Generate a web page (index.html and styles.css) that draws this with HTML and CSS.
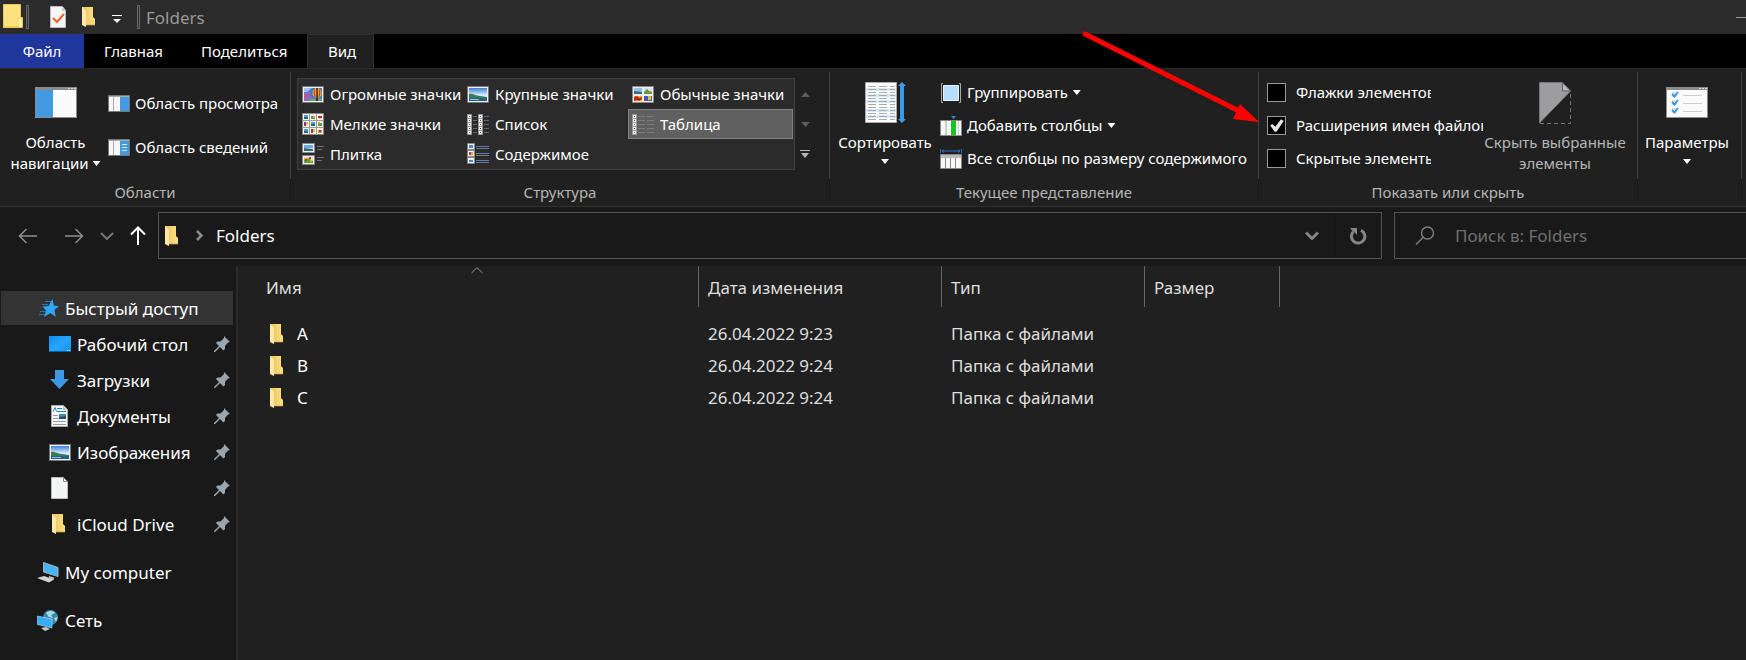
FILE: index.html
```
<!DOCTYPE html>
<html lang="ru">
<head>
<meta charset="utf-8">
<title>Folders</title>
<link rel="stylesheet" href="styles.css">
</head>
<body>
<svg class="sprite" aria-hidden="true">
  <defs>
    <linearGradient id="sky" x1="0" y1="0" x2="0" y2="1"><stop offset="0" stop-color="#3f7fd6"/><stop offset=".55" stop-color="#d6ecfa"/><stop offset="1" stop-color="#e9f6fb"/></linearGradient>
    <linearGradient id="blue" x1="0" y1="0" x2="1" y2="1"><stop offset="0" stop-color="#0a8df0"/><stop offset=".5" stop-color="#27a5fb"/><stop offset="1" stop-color="#0a93f5"/></linearGradient>
    <linearGradient id="gold" x1="0" y1="0" x2="1" y2="0"><stop offset="0" stop-color="#eac263"/><stop offset="1" stop-color="#ffe083"/></linearGradient>
  </defs>
  <symbol id="folder" viewBox="0 0 16 20"><path fill="url(#gold)" d="M1 0h11v10l2 2v6H1z"/><path fill="#ffe9a6" d="M1 0l4 4v16L1 18z"/><path fill="#d9ab4b" d="M5 17.500h9v.8H5z"/></symbol>
  <symbol id="scene" viewBox="0 0 22 17"><path fill="#eee" stroke="#777" d="M.5.5h21v16H.5z"/><path fill="url(#sky)" d="M2 2h18v13H2z"/><path fill="#3d7a56" d="M2 8c3-1 5 1 8 1.500 4 .5 7 1 10 1.500v1H2z"/><path fill="#266184" d="M2 12h18v3H2z"/><path fill="#8fc5e0" d="M3 13h9v1H3z"/></symbol>
  <symbol id="huge" viewBox="0 0 22 17"><path fill="#eee" stroke="#777" d="M.5.5h21v16H.5z"/><path fill="#3d79dc" d="M2 2h18v13H2z"/><path fill="#9bc3f2" d="M2 2h8l-5 4H2z"/><path fill="#8a6cc0" d="M2 6l3 1 2-2 2 2-1 3 3 3-1 2H2z"/><path fill="#e24b6c" d="M4 8l3 1-2 3H3z"/><path fill="#71a848" d="M9 13h11v2H7z"/><ellipse cx="15" cy="7" rx="4.500" ry="5" fill="#f4b51d"/><path fill="#1e1e2a" d="M14.300 2h1.400v11h-1.400z"/><path fill="none" stroke="#d5321f" stroke-width="1.200" d="M12.500 3.500c-1 3-.5 5 .8 7.500M17.500 3.500c1 3 .5 5-.8 7.500"/><path fill="#4a2b1a" d="M14 13h2v2h-2z"/></symbol>
  <symbol id="usual" viewBox="0 0 22 17"><path fill="#eee" stroke="#888" d="M.5.5h21v16H.5z"/><path fill="#8fc3ea" d="M2 2h8v6H2z"/><path fill="#2e7273" d="M2 5l8 1v2H2z"/><path fill="#cfe3f3" d="M12 2h8v6h-8z"/><path fill="#55a03c" d="M12 6l3-3 2 2 3 1v2h-8z"/><path fill="#e0742c" d="M17 5h2v2h-2z"/><path fill="#e7ab2a" d="M2 10h8v5H2z"/><path fill="#b8281c" d="M2 11l3-1 2 2 3-1v2l-3 2-2-1-3 1z"/><path fill="#2d62c8" d="M12 10h8v5h-8z"/><path fill="#f1bf25" d="M16 10h3v4h-3z"/><path fill="#a13676" d="M12 12l3 1v2h-3z"/></symbol>
  <symbol id="small" viewBox="0 0 22 22"><path fill="#f4f4f4" stroke="#888" d="M.5.5h21v21H.5z"/><path stroke="#9a9a9a" d="M7.500 0v22M14.500 0v22M0 7.500h22M0 14.500h22"/><path fill="#4b9bd5" d="M2 2h4v2H2zM9 9h4v2H9zM2 16h4v2H2z"/><path fill="#286a6b" d="M2 4h4v2H2zM9 11h4v2H9zM2 18h4v2H2z"/><path fill="#55a03c" d="M9 3h4v3H9zM16 10h4v3h-4z"/><path fill="#e8962e" d="M11 3h2v2h-2zM16 9h2v2h-2zM16 17h4v3h-4z"/><path fill="#bd2c1e" d="M16 3h4v2h-4zM17 17h2v2h-2zM9 17h2v3H9zM2 11h2v2H2z"/><path fill="#2458bf" d="M2 9h3v2H2zM9 16h3v1H9z"/><path fill="#f1bf25" d="M4 9h2v3H4zM11 16h2v3h-2zM17 5h2v1h-2z"/></symbol>
  <symbol id="list" viewBox="0 0 22 21"><g id="strip"><path fill="#eee" stroke="#999" d="M.5.5h4v20h-4z"/><path stroke="#999" d="M1 4.500h3M1 8.500h3M1 12.500h3M1 16.500h3"/><path fill="#2d6eb5" d="M2 2h1v1H2zM2 18h1v1H2z"/><path fill="#c43522" d="M2 6h1v1H2zM2 10h1v1H2z"/><path fill="#333" d="M2 14h1v1H2z"/></g><use href="#strip" x="11"/><path stroke="#666" d="M6 2.500h4M6 6.500h4M6 10.500h4M6 14.500h4M6 18.500h4M17 2.500h5M17 6.500h5M17 10.500h5M17 14.500h5M17 18.500h5"/></symbol>
  <symbol id="tile" viewBox="0 0 22 22"><path fill="#eee" stroke="#888" d="M.5.5h12v9H.5zM.5 12.500h12v9H.5z"/><path fill="#68aee3" d="M2 2h9v3H2z"/><path fill="#2e6e72" d="M2 5l9 1v2H2z"/><path fill="#d9e6c8" d="M2 14h9v6H2z"/><path fill="#59a33c" d="M2 17l4-2 5 3v2H2z"/><path fill="#f0a92b" d="M2 15h3v2H2zM8 17h2v2H8z"/><path fill="#c93a25" d="M3 16h2v2H3zM7 14h2v2H7z"/><path stroke="#717171" d="M15 3.500h7M15 6.500h5M15 14.500h7M15 17.500h5"/></symbol>
  <symbol id="content" viewBox="0 0 22 22"><path fill="#eee" stroke="#888" d="M.5.5h7v6h-7zM.5 7.500h7v6h-7zM.5 14.500h7v6h-7z"/><path fill="#438cc4" d="M2 2h4v3H2zM2 17h4v2H2z"/><path fill="#b83b70" d="M2 9h2v3H2z"/><path fill="#e8a827" d="M4 9h2v3H4z"/><path stroke="#4d7fc4" d="M9 3.500h13M9 10.500h13M9 17.500h13"/><path stroke="#777" d="M9 5.500h13M9 12.500h13M9 19.500h13"/></symbol>
  <symbol id="details" viewBox="0 0 22 21"><use href="#strip"/><path stroke="#7c7c7c" d="M6 2.500h7M6 6.500h7M6 10.500h7M6 14.500h7M6 18.500h7M15 2.500h7M15 6.500h7M15 10.500h7M15 14.500h7M15 18.500h7"/></symbol>
  <symbol id="pin" viewBox="0 0 16 16"><path fill="#9aa5ae" d="M10 0l6 6-2 .5-3 3.500 0 3-1.500 1.500L6 11l-5 5H0v-1l5-5-3-3L3.500 5.500h3L10 2z"/></symbol>
</svg>

<header class="titlebar">
  <svg class="app-icon" width="20" height="25" viewBox="0 0 20 25"><path fill="#ffe17f" stroke="#edc44f" d="M.5.5h17v13h2v10H.5z"/><path fill="#f3cc55" d="M0 22h16v2H0z"/><path fill="#fff0ae" d="M16 15h3v8h-3z"/></svg>
  <span class="grip"></span>
  <button class="quick" aria-label="Свойства"><svg width="16" height="22" viewBox="0 0 16 22"><path fill="#f6f6f6" stroke="#bbb" d="M.5.5h12l3 4v17H.5z"/><path fill="#ccc" d="M12 1v4h4z"/><path fill="none" stroke="#ee6323" stroke-width="2" d="M3 12l4 4 7-8"/></svg></button>
  <button class="quick folder-quick" aria-label="Новая папка"><svg width="16" height="20"><use href="#folder"/></svg></button>
  <button class="quick customize" aria-label="Настройка панели"><svg width="10" height="8" viewBox="0 0 10 8"><path fill="#fff" d="M0 0h10v1H0zM1 4h8L5 8z"/></svg></button>
  <span class="grip"></span>
  <h1 class="title">Folders</h1>
  <button class="minimize" aria-label="Свернуть"><svg width="10" height="1" viewBox="0 0 10 1"><path fill="#999" d="M0 0h10v1H0z"/></svg></button>
</header>

<nav class="tabs">
  <button class="tab tab-file">Файл</button>
  <button class="tab tab-home">Главная</button>
  <button class="tab tab-share">Поделиться</button>
  <button class="tab tab-active">Вид</button>
</nav>

<section class="ribbon">
  <div class="group group-panes">
    <div class="group-body">
      <button class="big"><svg class="big-icon" width="42" height="42" viewBox="0 0 42 42"><path fill="#fafafa" d="M0 5h42v31H0z"/><path fill="#8b8c8f" d="M0 5h42v3H0z"/><path fill="#429be2" d="M1 8h17v27H1z"/><path fill="none" stroke="#8b8c8f" d="M.5 5.500h41v30H.5z"/><path fill="#ddd" d="M33 6h2v1h-2zM36 6h2v1h-2zM39 6h2v1h-2z"/></svg><span>Область<br>навигации<i class="caret inline"></i></span></button>
      <div class="stack roomy">
        <button class="small"><svg width="22" height="17" viewBox="0 0 22 17"><path fill="#f7f7f7" stroke="#777" d="M.5.5h21v16H.5z"/><path fill="#429be2" d="M12 2h9v14h-9z"/><path fill="#aaa" d="M5 2h1v14H5zM1 1h20v1H1z"/></svg>Область просмотра</button>
        <button class="small"><svg width="22" height="17" viewBox="0 0 22 17"><path fill="#f7f7f7" stroke="#777" d="M.5.5h21v16H.5z"/><path fill="#429be2" d="M12 2h9v14h-9z"/><path fill="#aaa" d="M5 2h1v14H5zM1 1h20v1H1z"/><path stroke="#d5ebfb" d="M14 5.500h5M14 8.500h5M14 11.500h5"/></svg>Область сведений</button>
      </div>
    </div>
    <h2 class="group-name">Области</h2>
  </div>

  <div class="group group-layout">
    <div class="group-body">
      <div class="gallery">
        <button class="view"><svg width="22" height="17"><use href="#huge"/></svg>Огромные значки</button>
        <button class="view"><svg width="22" height="17"><use href="#scene"/></svg>Крупные значки</button>
        <button class="view"><svg width="22" height="17"><use href="#usual"/></svg>Обычные значки</button>
        <button class="view"><svg width="22" height="22"><use href="#small"/></svg>Мелкие значки</button>
        <button class="view"><svg width="22" height="21"><use href="#list"/></svg>Список</button>
        <button class="view selected"><svg width="22" height="21"><use href="#details"/></svg>Таблица</button>
        <button class="view"><svg width="22" height="22"><use href="#tile"/></svg>Плитка</button>
        <button class="view"><svg width="22" height="22"><use href="#content"/></svg>Содержимое</button>
      </div>
      <div class="gallery-scroll">
        <button aria-label="Вверх"><svg width="9" height="5" viewBox="0 0 9 5"><path fill="#5d5d5d" d="M0 5h9L4.500 0z"/></svg></button>
        <button aria-label="Вниз"><svg width="9" height="5" viewBox="0 0 9 5"><path fill="#5d5d5d" d="M0 0h9L4.500 5z"/></svg></button>
        <button aria-label="Ещё"><svg width="10" height="8" viewBox="0 0 10 8"><path fill="#b5b5b5" d="M0 0h10v1H0zM1 3h8L5 8z"/></svg></button>
      </div>
    </div>
    <h2 class="group-name">Структура</h2>
  </div>

  <div class="group group-current">
    <div class="group-body">
      <button class="big"><svg class="big-icon" width="42" height="42" viewBox="0 0 42 42"><path fill="#fff" stroke="#aaa" d="M1.500.500h31v40H1.500z"/><path fill="#d5eaf4" d="M2 6h30v3H2zM2 12h30v3H2zM2 18h30v3H2zM2 27h30v3H2zM2 33h30v3H2z"/><path stroke="#aaa" stroke-dasharray="8 3" d="M4 4.500h27M4 7.500h27M4 10.500h27M4 13.500h27M4 16.500h27M4 19.500h27M4 22.500h27M4 25.500h27M4 28.500h27M4 31.500h27M4 34.500h27M4 37.500h27"/><path fill="#3d9ae6" d="M38 0l4 4h-2v33h2l-4 4-4-4h2V4h-2z"/></svg><span>Сортировать</span><i class="caret"></i></button>
      <div class="stack">
        <button class="small"><svg width="22" height="20" viewBox="0 0 22 20"><path fill="none" stroke="#aaa" d="M3 .5H1.500v19H3M19 .500h1.500v19H19"/><path fill="#b5dffd" stroke="#e8f6ff" d="M3.500 2.500h15v15h-15z"/></svg>Группировать<i class="caret"></i></button>
        <button class="small"><svg width="22" height="20" viewBox="0 0 22 20"><path fill="#2f8bd8" d="M11 0h5l-2.500 3z"/><path fill="#f7f7f7" stroke="#888" d="M.5 4.500h21v15H.5z"/><path fill="#16c51c" d="M11 5h5v14h-5z"/><path fill="#ccc" d="M5 5h2v14H5zM18 5h1v14h-1z"/></svg>Добавить столбцы<i class="caret"></i></button>
        <button class="small"><svg width="22" height="20" viewBox="0 0 22 20"><path fill="none" stroke="#2876b8" d="M.5 0v4M21.500 0v4M2 2h18M4 .5L2 2l2 1.500M18 .5L20 2l-2 1.500"/><path fill="#f7f7f7" stroke="#888" d="M.5 5.500h21v14H.5z"/><path fill="#bbb" d="M1 6h20v3H1z"/><path stroke="#888" d="M5.500 9v10M10.500 9v10M15.500 9v10"/></svg>Все столбцы по размеру содержимого</button>
      </div>
    </div>
    <h2 class="group-name">Текущее представление</h2>
  </div>

  <div class="group group-show">
    <div class="group-body">
      <div class="checks">
        <label class="check"><input type="checkbox"><span class="clip">Флажки элементов</span></label>
        <label class="check"><input type="checkbox" checked><span class="clip long">Расширения имен файлов</span></label>
        <label class="check"><input type="checkbox"><span class="clip">Скрытые элементы</span></label>
      </div>
      <button class="big muted" disabled><svg class="big-icon" width="32" height="42" viewBox="0 0 32 42"><path fill="#9d9da0" stroke="#77787a" d="M.5.5h23l8 8.500L.5 41z"/><path fill="#b9b9bb" stroke="#5c5c5f" d="M23.500.5v8.500h8z"/><path fill="none" stroke="#777" stroke-dasharray="4 3" d="M31.500 12v29.500H1"/></svg><span>Скрыть выбранные<br>элементы</span></button>
    </div>
    <h2 class="group-name">Показать или скрыть</h2>
  </div>

  <div class="group group-options">
    <div class="group-body">
      <button class="big"><svg class="big-icon" width="42" height="42" viewBox="0 0 42 42"><path fill="#fafafa" stroke="#8b8c8f" d="M.5 5.500h41v30H.5z"/><path fill="#8b8c8f" d="M0 5h42v3H0z"/><path fill="#ddd" d="M33 6h2v1h-2zM36 6h2v1h-2zM39 6h2v1h-2z"/><path fill="#ddd" d="M6 10h5v5H6zM6 18h5v5H6zM6 26h5v5H6z"/><path fill="none" stroke="#3d9ae6" stroke-width="2" d="M6 12l2.500 2.500L12 10M6 20l2.500 2.500L12 18M6 28l2.500 2.500L12 26"/><path stroke="#ccc" d="M17 13.500h19M17 21.500h19M17 29.500h19"/></svg><span>Параметры</span><i class="caret"></i></button>
    </div>
  </div>
</section>

<div class="address-row">
  <div class="history">
    <button aria-label="Назад"><svg width="20" height="16" viewBox="0 0 20 16"><path fill="none" stroke="#8f8f8f" stroke-width="1.500" d="M19 8H1.500M8.500 1l-7 7 7 7"/></svg></button>
    <button aria-label="Вперед"><svg width="20" height="16" viewBox="0 0 20 16"><path fill="none" stroke="#8f8f8f" stroke-width="1.500" d="M1 8h17.500M11.500 1l7 7-7 7"/></svg></button>
    <button aria-label="Последние"><svg width="14" height="8" viewBox="0 0 14 8"><path fill="none" stroke="#777" stroke-width="2" d="M1 1l6 6 6-6"/></svg></button>
    <button aria-label="Вверх"><svg width="16" height="19" viewBox="0 0 16 19"><path fill="none" stroke="#fff" stroke-width="2" d="M8 19V1.500M1 8.500l7-7 7 7"/></svg></button>
  </div>
  <div class="address">
    <svg width="16" height="20"><use href="#folder"/></svg>
    <svg class="crumb" width="7" height="11" viewBox="0 0 7 11"><path fill="none" stroke="#8b8b8b" stroke-width="2.500" d="M1 1l4.500 4.500L1 10"/></svg>
    <a class="path" href="#">Folders</a>
    <button class="dropdown" aria-label="Предыдущие расположения"><svg width="14" height="10" viewBox="0 0 14 10"><path fill="none" stroke="#858585" stroke-width="3" d="M1 1.500l6 6 6-6"/></svg></button>
    <button class="refresh" aria-label="Обновить"><svg width="18" height="18" viewBox="0 0 18 18"><path fill="none" stroke="#858585" stroke-width="3" d="M12 3.300A6.700 6.700 0 1 1 4.500 4.500"/><path fill="#858585" d="M1 1h7v7L5.700 5.500 3 3.300z"/></svg></button>
  </div>
  <label class="search">
    <svg width="20" height="19" viewBox="0 0 20 19"><circle cx="12.500" cy="7" r="6" fill="none" stroke="#7f7f7f" stroke-width="1.400"/><path stroke="#7f7f7f" stroke-width="1.400" d="M8.500 11L1 18.500"/></svg>
    <input type="text" placeholder="Поиск в: Folders" aria-label="Поиск в: Folders">
  </label>
</div>

<main class="explorer">
  <nav class="sidebar">
    <a class="place root current" href="#"><svg width="20" height="19" viewBox="0 0 20 19"><path fill="#2ea8f8" d="M13.500 0l1.400 6.500 5.100.7-4.500 3.500 1.200 7L11.500 14 5 18l2-6.500L3.500 7.500l6-.5z"/><path stroke="#1c7cc0" d="M6 2.500h6M3 5.500h6M1 12.500h6M0 15.500h6"/></svg>Быстрый доступ</a>
    <a class="place" href="#"><svg width="22" height="16" viewBox="0 0 22 16"><path fill="url(#blue)" d="M0 0h22v16H0z"/><path stroke="#08629f" d="M0 15.500h22"/><path fill="#fff" d="M18 14h1v1h-1zM20 14h1v1h-1z"/></svg>Рабочий стол<svg class="pin"><use href="#pin"/></svg></a>
    <a class="place" href="#"><svg width="22" height="20" viewBox="0 0 22 20"><path fill="#3d98e3" d="M6 0h9v9h5l-9.500 10L1 9h5z"/></svg>Загрузки<svg class="pin"><use href="#pin"/></svg></a>
    <a class="place" href="#"><svg width="22" height="22" viewBox="0 0 22 22"><path fill="#f5f7f8" stroke="#aaa" d="M2.500.5h12l4 4v17h-16z"/><path fill="#bbb" d="M14 1v4h4z"/><path fill="none" stroke="#2c84bb" d="M8 3.500h5M8 6.500h9M4 6.500l2-4 1.500 4"/><path stroke="#999" d="M4 10.500h5M4 13.500h5M4 16.500h13M4 19.500h13"/><path fill="#3a8fb5" d="M10 9h7v5h-7z"/><path fill="#294f64" d="M10 12l7-1v3h-7z"/></svg>Документы<svg class="pin"><use href="#pin"/></svg></a>
    <a class="place" href="#"><svg width="22" height="17"><use href="#scene"/></svg>Изображения<svg class="pin"><use href="#pin"/></svg></a>
    <a class="place" href="#" aria-label="Файл"><svg width="22" height="22" viewBox="0 0 22 22"><path fill="#f3f4f4" stroke="#bbb" d="M2.500.5h12l4 4v17h-16z"/><path fill="#fff" stroke="#888" d="M14.500.5v4h4z"/></svg><svg class="pin"><use href="#pin"/></svg></a>
    <a class="place" href="#"><svg width="22" height="20" viewBox="0 0 22 20"><use href="#folder" x="2" width="16" height="20"/></svg>iCloud Drive<svg class="pin"><use href="#pin"/></svg></a>
    <a class="place root spaced" href="#"><svg width="22" height="21" viewBox="0 0 22 21"><path fill="#44b5f7" stroke="#9db6c3" d="M6.500.5L21 5.500v9L6.500 10z"/><path fill="#b9c3c9" d="M12 14l5 1.500v2L12 16z"/><path fill="#cfd4d7" d="M0 16l7-2 10 3.500-5 3z"/></svg>My computer</a>
    <a class="place root spaced" href="#"><svg width="22" height="21" viewBox="0 0 22 21"><circle cx="13.500" cy="7.500" r="7.500" fill="#3c87a8"/><path fill="#a5dae8" d="M9 3c3-3 8-2 9 0l-4 2 2 3-4-1zM17 8l4-1-2 5z"/><path fill="#35aefa" stroke="#b9dced" stroke-width=".6" d="M.5 6L15 9v9L.5 14.500z"/><path fill="#c2cbd0" d="M4 18l5-1 4 2-5 2z"/></svg>Сеть</a>
  </nav>
  <div class="files">
    <table class="file-table">
      <colgroup><col class="col-name"><col class="col-date"><col class="col-type"><col class="col-size"></colgroup>
      <thead>
        <tr><th class="sorted">Имя<svg class="sort" width="12" height="7" viewBox="0 0 12 7"><path fill="none" stroke="#999" d="M.5 6L6 .7 11.500 6"/></svg></th><th>Дата изменения</th><th>Тип</th><th>Размер</th></tr>
      </thead>
      <tbody>
        <tr><td><span class="file"><svg width="16" height="20"><use href="#folder"/></svg>A</span></td><td>26.04.2022 9:23</td><td>Папка с файлами</td><td></td></tr>
        <tr><td><span class="file"><svg width="16" height="20"><use href="#folder"/></svg>B</span></td><td>26.04.2022 9:24</td><td>Папка с файлами</td><td></td></tr>
        <tr><td><span class="file"><svg width="16" height="20"><use href="#folder"/></svg>C</span></td><td>26.04.2022 9:24</td><td>Папка с файлами</td><td></td></tr>
      </tbody>
    </table>
  </div>
</main>

<svg class="pointer" width="180" height="96" viewBox="0 0 180 96" aria-hidden="true"><path stroke="#f00" stroke-width="5" stroke-linecap="round" d="M4 5l154 77"/><path fill="#f00" d="M159 75l19 18-26-3z"/></svg>
</body>
</html>
```
FILE: styles.css
```
* { box-sizing: border-box; }
body {
  margin: 0;
  min-height: 100vh;
  display: flex;
  flex-direction: column;
  overflow-x: hidden;
  background: #191919;
  color: #fff;
  font: 15px/21px "Noto Sans", "Open Sans", sans-serif;
}
button {
  font: inherit;
  color: inherit;
  background: none;
  border: 0;
  padding: 0;
}
a { color: inherit; text-decoration: none; }
svg { flex: none; }
.sprite { position: absolute; width: 0; height: 0; }

.titlebar {
  display: flex;
  align-items: center;
  height: 34px;
  padding-left: 3px;
  background: #2b2b2b;
}
.app-icon { margin: 0 3px 2px 0; }
.grip { width: 3px; height: 24px; border: 1px solid #666; background: #333; }
.quick { display: flex; margin-left: 21px; }
.folder-quick { margin-left: 15px; }
.customize { margin: 3px 15px 0 15px; }
.title { margin: 0 0 0 6px; font-size: 17px; font-weight: 400; color: #999; }
.minimize { margin-left: auto; display: flex; }

.tabs { display: flex; height: 34px; background: #000; }
.tab { padding: 0 20px; }
.tab-file { width: 84px; background: #1f369d; }
.tab-home { width: 97px; }
.tab-share { width: 126px; }
.tab-active { width: 67px; background: #202020; border: solid #303030; border-width: 1px 1px 0; }

.ribbon {
  display: flex;
  background: #202020;
  border-top: 1px solid #2b2b2b;
  border-bottom: 1px solid #303030;
}
.group {
  flex: none;
  display: flex;
  flex-direction: column;
  margin: 3px 0 4px;
  padding: 7px 0 0;
  height: 130px;
  border-right: 1px solid;
  border-image: linear-gradient(#404040 82%, #1a1a1a 82%) 1;
}
.group-body { display: flex; flex: 1; }
.group-name { margin: 0; font-size: 15px; font-weight: 400; text-align: center; color: #b5b5b5; line-height: 20px; }
.group-panes { width: 291px; }
.group-layout { width: 539px; }
.group-current { width: 429px; }
.group-show { width: 379px; }
.group-options { width: 104px; }

.big { display: flex; flex-direction: column; align-items: center; padding-top: 3px; }
.big-icon { margin-bottom: 8px; }
.caret { display: inline-block; width: 8px; height: 5px; background: #fff; clip-path: polygon(0 0, 100% 0, 50% 100%); }
.big > .caret { margin-top: 6px; }
.big .inline { margin: 0 0 3px 4px; }
.group-panes .big { width: 108px; padding-left: 3px; }
.group-current .big { width: 110px; }
.group-show .big { width: 150px; }
.group-options .big { width: 98px; }
.muted { color: #b5b5b5; }
.stack { display: flex; flex-direction: column; gap: 12px; padding-top: 3px; }
.roomy { gap: 23px; padding-top: 14px; }
.small { display: flex; align-items: center; gap: 5px; white-space: nowrap; }

.gallery {
  display: grid;
  grid-template-columns: repeat(3, 165px);
  grid-template-rows: repeat(3, 30px);
  width: 498px;
  height: 92px;
  margin: -1px 0 0 6px;
  background: #2b2b2b;
  border: 1px solid #404040;
}
.view { display: flex; align-items: center; gap: 6px; padding-left: 4px; white-space: nowrap; }
.selected { background: #606060; border: 1px solid #808080; padding-left: 3px; }
.gallery-scroll { display: grid; grid-template-rows: repeat(3, 30px); width: 20px; }
.gallery-scroll button { display: flex; align-items: center; justify-content: center; }

.checks { display: flex; flex-direction: column; gap: 12px; width: 221px; padding: 3px 0 0 8px; }
.check { display: flex; align-items: center; gap: 10px; }
.check input {
  appearance: none;
  flex: none;
  width: 19px;
  height: 19px;
  margin: 0;
  background: #000;
  border: 1px solid #999;
}
.check input:checked::before {
  content: "";
  display: block;
  width: 15px;
  height: 13px;
  margin: 2px 1px;
  background: #e5e5e5;
  clip-path: polygon(8% 50%, 22% 38%, 42% 60%, 80% 2%, 98% 16%, 50% 98%, 38% 98%);
}
.clip { flex: none; width: 135px; overflow: hidden; white-space: nowrap; }
.long { width: 187px; }

.address-row { display: flex; padding: 5px 0 7px; }
.history { display: flex; align-items: center; width: 158px; padding-left: 18px; }
.history button { display: flex; margin-right: 26px; }
.history button + button { margin-right: 16px; }
.address { flex: 1; display: flex; align-items: center; height: 47px; padding-left: 5px; border: 1px solid #555; font-size: 17px; }
.crumb { margin: 0 13px 0 16px; }
.dropdown { margin-left: auto; display: flex; padding-right: 15px; }
.refresh { width: 47px; height: 45px; display: flex; align-items: center; justify-content: center; border-left: 1px solid #141414; }
.search { width: 352px; display: flex; align-items: center; gap: 20px; margin-left: 12px; padding-left: 20px; border: 1px solid #555; border-right: 0; }
.search input { flex: 1; min-width: 0; padding: 0; background: none; border: 0; outline: 0; color: #ddd; font: inherit; font-size: 17px; }
.search input::placeholder { color: #6f6f6f; opacity: 1; }

.explorer { flex: 1; display: flex; font-size: 17px; }
.sidebar { flex: none; width: 238px; padding: 25px 3px 0 1px; border-right: 2px solid #2b2b2b; }
.place { display: flex; align-items: center; gap: 6px; height: 34px; margin-bottom: 2px; padding: 0 3px 0 48px; }
.root { padding-left: 36px; }
.root.current { padding-left: 38px; }
.current { background: #333; }
.spaced { margin-top: 14px; }
.pin { width: 16px; height: 16px; margin-left: auto; }
.files { flex: 1; background: #202020; }
.file-table { border-collapse: separate; border-spacing: 0; table-layout: fixed; width: 1042px; line-height: 24px; }
.col-name { width: 461px; }
.col-date { width: 243px; }
.col-type { width: 203px; }
.col-size { width: 135px; }
th { position: relative; height: 41px; padding: 2px 0 0 9px; font-weight: 400; text-align: left; color: #dedede; border-right: 1px solid #636363; }
th:first-child { padding-left: 28px; }
.sort { position: absolute; top: 1px; left: 233px; }
td { height: 32px; padding: 0 0 0 9px; color: #dedede; }
td:first-child { padding-left: 31px; color: #fff; }
tbody::before { content: ""; display: block; height: 11px; }
.file { display: flex; align-items: center; gap: 12px; }
.pointer { position: absolute; left: 1081px; top: 29px; fill: none; pointer-events: none; }
```
